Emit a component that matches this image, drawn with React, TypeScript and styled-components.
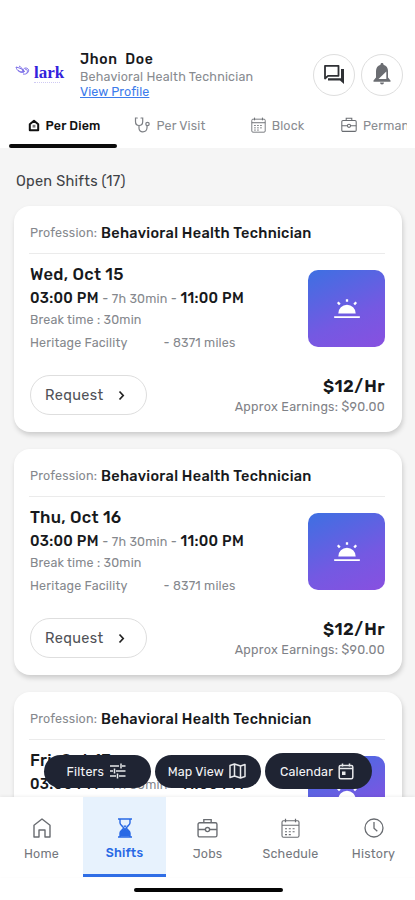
import React from "react";
import styled, { createGlobalStyle, css } from "styled-components";

const GlobalStyle = createGlobalStyle`
  * { box-sizing: border-box; }
  html, body { margin: 0; padding: 0; background: #fff; }
  body { font-family: Rubik, Roboto, "Liberation Sans", sans-serif; color: #17191c; overflow: hidden; }
  button, a { font: inherit; color: inherit; }
  svg { display: block; flex: none; }
`;

const Screen = styled.div`
  display: flex;
  flex-direction: column;
  width: 415px;
  height: 900px;
  background: #fff;
  overflow: hidden;
`;

const Header = styled.header`
  display: flex;
  flex: none;
  height: 104px;
  padding: 51px 11px 0 14px;
`;

const Logo = styled.div`
  display: flex;
  width: 66px;
  padding-top: 12px;
`;

const LogoText = styled.div`
  display: flex;
  flex-direction: column;
  margin-left: 2px;
`;

const LogoWord = styled.span`
  font: 700 17px/19px "Liberation Serif", serif;
  letter-spacing: 0px;
  color: #3322dc;
`;

const LogoRule = styled.span`
  width: 26px;
  border-top: 1px dotted #cfcaf3;
`;

const Profile = styled.div`
  flex: 1;
  white-space: nowrap;
`;

const UserName = styled.div`
  font-size: 14px;
  font-weight: 500;
  line-height: 18px;
  letter-spacing: 0.65px;
  white-space: pre;
`;

const Role = styled.div`
  font-size: 12.5px;
  line-height: 15px;
  letter-spacing: 0.18px;
  color: #888b90;
`;

const ProfileLink = styled.a`
  display: block;
  width: max-content;
  font-size: 12.5px;
  line-height: 15px;
  letter-spacing: 0.08px;
  color: #3c7cec;
  text-decoration: underline;
`;

const HeaderActions = styled.div`
  display: flex;
  gap: 6px;
  padding-top: 3px;
  margin-right: 1px;
`;

const RoundButton = styled.button`
  display: grid;
  place-items: center;
  width: 42px;
  height: 42px;
  padding: 0 0 2px;
  border: 1px solid #dedede;
  border-radius: 50%;
  background: #fff;
`;

const Tabs = styled.nav`
  display: flex;
  flex: none;
  height: 44px;
  margin-right: 8px;
  padding-left: 9px;
  overflow: hidden;
`;

const Tab = styled.div<{ $active?: boolean; $width: number }>`
  display: flex;
  flex: none;
  align-items: center;
  justify-content: center;
  gap: 6px;
  width: ${(p) => p.$width}px;
  height: 44px;
  padding-top: 2px;
  font-size: 12.5px;
  letter-spacing: 0.15px;
  white-space: nowrap;
  color: #898c91;
  border-bottom: 4px solid transparent;
  ${(p) =>
    p.$active &&
    css`
      position: relative;
      color: #111;
      font-weight: 500;
      padding-left: 2px;
      &::after {
        content: "";
        position: absolute;
        left: 0;
        right: 0;
        bottom: -4px;
        height: 4px;
        border-radius: 2px;
        background: #0b0b0b;
      }
    `}
`;

const Main = styled.main`
  position: relative;
  flex: 1;
  min-height: 0;
  padding: 23px 13px 0 14px;
  background: #f5f5f5;
  overflow: hidden;
`;

const SectionTitle = styled.h1`
  margin: 0 0 15px 2px;
  font-size: 14.5px;
  font-weight: 400;
  line-height: 20px;
  letter-spacing: 0.26px;
  color: #404246;
`;

const Card = styled.article`
  height: 226px;
  margin-bottom: 17px;
  padding: 10px 17px 0 16px;
  border-radius: 16px;
  background: #fff;
  box-shadow: 1px 3px 5px rgba(0, 0, 0, 0.17);
`;

const Profession = styled.div`
  display: flex;
  align-items: center;
  gap: 4px;
  height: 38px;
  padding-bottom: 4px;
  margin-left: -1px;
  padding-left: 1px;
  border-bottom: 1px solid #ebebeb;
  white-space: nowrap;
`;

const Muted = styled.span<{ $spacing?: number }>`
  font-size: 12.5px;
  font-weight: 400;
  letter-spacing: ${(p) => p.$spacing ?? 0.17}px;
  color: #85888d;
`;

const ProfessionName = styled.span`
  font-size: 14.5px;
  font-weight: 500;
  letter-spacing: 0.29px;
`;

const ShiftBody = styled.div`
  display: flex;
  justify-content: space-between;
  height: 110px;
  padding-top: 9px;
  white-space: nowrap;
`;

const ShiftDate = styled.h2`
  margin: 0;
  font-size: 16.5px;
  font-weight: 500;
  line-height: 24px;
  letter-spacing: 0.3px;
`;

const ShiftTime = styled.div`
  font-size: 14.5px;
  font-weight: 500;
  line-height: 22px;
  letter-spacing: 0.3px;
`;

const DetailLine = styled.div<{ $height: number }>`
  display: flex;
  gap: 36px;
  line-height: ${(p) => p.$height}px;
`;

const ShiftTile = styled.div`
  display: grid;
  place-items: center;
  width: 77px;
  height: 77px;
  margin-top: 7px;
  border-radius: 10px;
  background: linear-gradient(155deg, #3d70e2 0%, #7459e2 60%, #8850e0 100%);
`;

const CardFooter = styled.div`
  display: flex;
  justify-content: space-between;
  padding-top: 11px;
`;

const RequestButton = styled.button`
  display: flex;
  align-items: center;
  gap: 14px;
  width: 117px;
  height: 40px;
  padding: 0 0 0 14px;
  border: 1px solid #dedede;
  border-radius: 20px;
  background: #fff;
  color: #505257;
  font-size: 14.5px;
  letter-spacing: 0.35px;
`;

const Pay = styled.div`
  text-align: right;
  white-space: nowrap;
`;

const Rate = styled.div`
  font-size: 17px;
  font-weight: 600;
  line-height: 23px;
  letter-spacing: 0.4px;
`;

const Earnings = styled.div`
  font-size: 12.5px;
  line-height: 18px;
  letter-spacing: 0.28px;
  color: #7f8287;
`;

const FloatingActions = styled.div`
  position: absolute;
  left: 44px;
  bottom: 8px;
  display: flex;
  align-items: center;
  gap: 4px;
`;

const Pill = styled.button<{ $tall?: boolean }>`
  display: flex;
  align-items: center;
  justify-content: center;
  gap: 5px;
  width: ${(p) => (p.$tall ? 107 : 106.5)}px;
  height: ${(p) => (p.$tall ? 36 : 33)}px;
  padding: ${(p) => (p.$tall ? "0 3px 0 0" : "0 2px 0 0")};
  border: 0;
  border-radius: 18px;
  background: #1f2433;
  color: #f4f5f7;
  font-size: 12.5px;
  font-weight: 400;
  letter-spacing: 0.15px;
  white-space: nowrap;
`;

const BottomNav = styled.nav`
  display: grid;
  grid-template-columns: repeat(5, 83px);
  flex: none;
  height: 80px;
  background: #fff;
  box-shadow: 0 -1px 3px rgba(0, 0, 0, 0.06);
  z-index: 1;
`;

const NavItem = styled.div<{ $active?: boolean }>`
  display: flex;
  flex-direction: column;
  align-items: center;
  gap: ${(p) => (p.$active ? 5 : 6)}px;
  padding-top: 20px;
  border-bottom: 3px solid ${(p) => (p.$active ? "#2f6ee6" : "transparent")};
  background: ${(p) => (p.$active ? "#e7f2fd" : "transparent")};
  color: ${(p) => (p.$active ? "#2869e5" : "#74777d")};
  font-size: 12.5px;
  font-weight: ${(p) => (p.$active ? 500 : 400)};
  line-height: 18px;
  letter-spacing: 0.2px;
`;

const HomeArea = styled.div`
  flex: none;
  height: 23px;
  padding-top: 11px;
`;

const HomeIndicator = styled.div`
  width: 149px;
  height: 4px;
  margin-left: 134px;
  border-radius: 2px;
  background: #050505;
`;

const BirdMark = () => (
  <svg width="18" height="17" viewBox="0 0 18 17" fill="none">
    <path d="M2 4c3 1 5 1 8 4M2 4c1 4 4 6 8 5M5 3c2 1 4 3 5 6M4 7c2 2 4 3 7 1M8 9c1-4 4-5 6-3 2 2-1 6-5 5M11 6c2 0 3 2 2 4" stroke="#7a6ce8" strokeWidth="1" />
  </svg>
);

const ChatIcon = () => (
  <svg width="23" height="21" viewBox="0 0 23 21" fill="none">
    <path d="M2 1.800h13.500v10H5L2 14.500z" stroke="#2e3034" strokeWidth="1.800" strokeLinejoin="round" />
    <path d="M18 5h3v15l-4-3.500H5v-2.300h13z" fill="#2e3034" />
  </svg>
);

const BellIcon = () => (
  <svg width="20" height="24" viewBox="0 0 20 24">
    <path d="M10 1c1 0 1.500.7 1.500 1.700C14.500 3.500 16 6 16 9v6.500l2.500 3v1.200h-17v-1.200l2.500-3V9c0-3 1.500-5.500 4.500-6.300C8.500 1.700 9 1 10 1z" fill="#6b6d72" />
    <path d="M14.300 9.500v7.500H6.500z" fill="#fff" />
    <path d="M8 20.500h4a2 2 0 0 1-4 0z" fill="#6b6d72" />
  </svg>
);

const HouseBadge = () => (
  <svg width="12" height="13" viewBox="0 0 12 13" fill="none">
    <path d="M1.800 5.300 6 1.800l4.200 3.500v5.900H1.800z" stroke="#111" strokeWidth="2" strokeLinejoin="round" />
    <path d="M4.600 5.800h2.800v2.800H4.600z" fill="#777" />
  </svg>
);

const StethoscopeIcon = () => (
  <svg width="17" height="16" viewBox="0 0 17 16" fill="none" stroke="#7c7f84" strokeWidth="1.200" strokeLinecap="round">
    <path d="M3.300 1H1.500v3.500C1.500 7 3 8.500 5 8.500s3.700-1.500 3.700-4V1H7M5 8.500v2.700c0 5 7.500 4.700 8-.2V8.500" />
    <circle cx="13.500" cy="7" r="1.700" />
  </svg>
);

const CalendarGrid = ({ size }: { size: number }) => (
  <svg width={size} height={size * 1.080} viewBox="0 0 19 20" fill="none" stroke="#696c71">
    <rect x="1" y="2.500" width="17" height="16.500" rx="1.500" strokeWidth="1.100" />
    <path d="M1 7h17M4.500.500v3.500M14.500.500v3.500" strokeWidth="1.200" />
    <path d="M4 10.500h2m1.800 0h2m1.800 0h2M4 13.500h2m1.800 0h2m1.800 0h2M4 16.300h2m1.800 0h2" strokeWidth="1.200" />
  </svg>
);

const Briefcase = ({ size }: { size: number }) => (
  <svg width={size} height={size * 0.950} viewBox="0 0 20 19" fill="none" stroke="#696c71" strokeWidth="1.300">
    <rect x="1" y="4.500" width="18" height="13.500" rx="1.500" />
    <path d="M6.500 4.500v-3h7v3M1 11h7m4 0h7" />
    <circle cx="10" cy="11" r="2" />
  </svg>
);

const SunriseIcon = () => (
  <svg width="26" height="22" viewBox="0 0 26 22" fill="#fff">
    <path d="M4.300 15.500a8.700 8.700 0 0 1 17.400 0z" />
    <path d="M.8 19.100h24.400" stroke="#fff" strokeWidth="1.800" strokeLinecap="round" />
    <path d="M13 1.200v2.500M3.800 4.300l2 2.200M22.200 4.300l-2 2.200" stroke="#fff" strokeWidth="2.300" />
  </svg>
);

const Chevron = () => (
  <svg width="7" height="11" viewBox="0 0 7 11" fill="none">
    <path d="m1.500 1.500 3.700 4-3.700 4" stroke="#222" strokeWidth="1.700" />
  </svg>
);

const FilterIcon = () => (
  <svg width="17" height="16" viewBox="0 0 17 16" fill="none" stroke="#e8e9ec" strokeWidth="1.500">
    <path d="M1 3h9m3 0h3.500M12 .5v5M1 8h3m3 0h9.500M5.500 5.500v5M1 13h6m3 0h6.500M8.500 10.500v5" />
  </svg>
);

const MapIcon = () => (
  <svg width="17" height="16" viewBox="0 0 17 16" fill="none" stroke="#e8e9ec" strokeWidth="1.500" strokeLinejoin="round">
    <path d="m1 2.500 4.500-1.500 6 2 4.500-1.500v12L11.500 15l-6-2L1 14.500zM5.500 1v12M11.500 3v12" />
  </svg>
);

const EventIcon = () => (
  <svg width="16" height="17" viewBox="0 0 16 17" fill="none" stroke="#e8e9ec" strokeWidth="1.500">
    <rect x="1.200" y="2.500" width="13.600" height="13.300" rx="1.500" />
    <path d="M1.200 5.500h13.600M4.500.500v3M11.500.500v3" />
    <rect x="4" y="8.500" width="3.500" height="3.500" fill="#e8e9ec" stroke="none" />
  </svg>
);

const HomeIcon = () => (
  <svg width="20" height="22" viewBox="0 0 20 22" fill="none" stroke="#696c71" strokeWidth="1.400" strokeLinejoin="round">
    <path d="M2 8.300 10 2l8 6.300V20h-5v-7H7v7H2z" />
  </svg>
);

const Hourglass = () => (
  <svg width="16" height="22" viewBox="0 0 16 22" fill="none" stroke="#2869e5">
    <path d="M1 2h14M1 20h14" strokeWidth="1.700" />
    <path d="M3 2v4c0 2 3.500 3.500 3.500 5S3 14 3 16v4M13 2v4c0 2-3.500 3.500-3.500 5S13 14 13 16v4" strokeWidth="1.400" />
    <path d="M3 19.500V16c0-2 3-3 5-5.500 2 2.500 5 3.500 5 5.500v3.500zM6.500 8.500h3L8 11z" fill="#2869e5" stroke="none" />
  </svg>
);

const ClockIcon = () => (
  <svg width="20" height="22" viewBox="0 0 20 22" fill="none" stroke="#696c71" strokeWidth="1.300">
    <circle cx="10" cy="11" r="9" />
    <path d="M10 5v6.300l3.300 3" />
  </svg>
);

const IconSlot = styled.span`
  display: grid;
  place-items: center;
  height: 22px;
`;

const ShiftCard = ({ date }: { date: string }) => (
  <Card>
    <Profession>
      <Muted>Profession:</Muted>
      <ProfessionName>Behavioral Health Technician</ProfessionName>
    </Profession>
    <ShiftBody>
      <div>
        <ShiftDate>{date}</ShiftDate>
        <ShiftTime>
          03:00 PM <Muted>- 7h 30min -</Muted> 11:00 PM
        </ShiftTime>
        <DetailLine $height={20}>
          <Muted>Break time : 30min</Muted>
        </DetailLine>
        <DetailLine $height={26}>
          <Muted>Heritage Facility</Muted>
          <Muted>- 8371 miles</Muted>
        </DetailLine>
      </div>
      <ShiftTile>
        <SunriseIcon />
      </ShiftTile>
    </ShiftBody>
    <CardFooter>
      <RequestButton>
        Request <Chevron />
      </RequestButton>
      <Pay>
        <Rate>$12/Hr</Rate>
        <Earnings>Approx Earnings: $90.00</Earnings>
      </Pay>
    </CardFooter>
  </Card>
);

const navItems = [
  { label: "Home", icon: <HomeIcon /> },
  { label: "Shifts", icon: <Hourglass />, active: true },
  { label: "Jobs", icon: <Briefcase size={21} /> },
  { label: "Schedule", icon: <CalendarGrid size={19} /> },
  { label: "History", icon: <ClockIcon /> },
];

export default function App() {
  return (
    <>
      <GlobalStyle />
      <Screen>
        <Header>
          <Logo>
            <BirdMark />
            <LogoText>
              <LogoWord>lark</LogoWord>
              <LogoRule />
            </LogoText>
          </Logo>
          <Profile>
            <UserName>{"Jhon  Doe"}</UserName>
            <Role>Behavioral Health Technician</Role>
            <ProfileLink href="#">View Profile</ProfileLink>
          </Profile>
          <HeaderActions>
            <RoundButton aria-label="Messages">
              <ChatIcon />
            </RoundButton>
            <RoundButton aria-label="Notifications">
              <BellIcon />
            </RoundButton>
          </HeaderActions>
        </Header>
        <Tabs>
          <Tab $active $width={108}>
            <HouseBadge /> Per Diem
          </Tab>
          <Tab $width={105}>
            <StethoscopeIcon /> Per Visit
          </Tab>
          <Tab $width={111}>
            <CalendarGrid size={15} /> Block
          </Tab>
          <Tab $width={104}>
            <Briefcase size={16} /> Permanent
          </Tab>
        </Tabs>
        <Main>
          <SectionTitle>Open Shifts (17)</SectionTitle>
          <ShiftCard date="Wed, Oct 15" />
          <ShiftCard date="Thu, Oct 16" />
          <ShiftCard date="Fri, Oct 17" />
          <FloatingActions>
            <Pill>
              Filters <FilterIcon />
            </Pill>
            <Pill>
              Map View <MapIcon />
            </Pill>
            <Pill $tall>
              Calendar <EventIcon />
            </Pill>
          </FloatingActions>
        </Main>
        <BottomNav>
          {navItems.map((item) => (
            <NavItem key={item.label} $active={item.active}>
              <IconSlot>{item.icon}</IconSlot>
              {item.label}
            </NavItem>
          ))}
        </BottomNav>
        <HomeArea>
          <HomeIndicator />
        </HomeArea>
      </Screen>
    </>
  );
}
